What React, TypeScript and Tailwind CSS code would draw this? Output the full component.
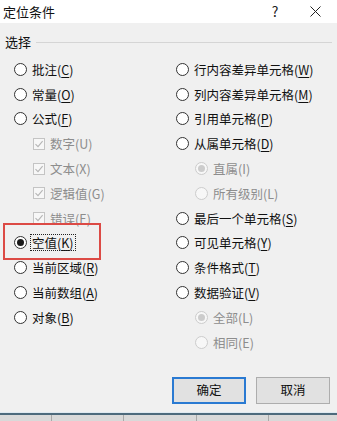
import React from 'react'

const FONT = '"Noto Sans CJK SC", "Noto Sans", sans-serif'

type Item = {
  label: string
  key: string
  kind: 'radio' | 'check' | 'sub'
  checked?: boolean
  disabled?: boolean
  underline?: boolean
}

const left: Item[] = [
  { label: '批注', key: 'C', kind: 'radio', underline: true },
  { label: '常量', key: 'O', kind: 'radio', underline: true },
  { label: '公式', key: 'F', kind: 'radio', underline: true },
  { label: '数字', key: 'U', kind: 'check', checked: true, disabled: true },
  { label: '文本', key: 'X', kind: 'check', checked: true, disabled: true },
  { label: '逻辑值', key: 'G', kind: 'check', checked: true, disabled: true },
  { label: '错误', key: 'E', kind: 'check', checked: true, disabled: true },
  { label: '空值', key: 'K', kind: 'radio', checked: true, underline: true },
  { label: '当前区域', key: 'R', kind: 'radio', underline: true },
  { label: '当前数组', key: 'A', kind: 'radio', underline: true },
  { label: '对象', key: 'B', kind: 'radio', underline: true },
]

const right: Item[] = [
  { label: '行内容差异单元格', key: 'W', kind: 'radio', underline: true },
  { label: '列内容差异单元格', key: 'M', kind: 'radio', underline: true },
  { label: '引用单元格', key: 'P', kind: 'radio', underline: true },
  { label: '从属单元格', key: 'D', kind: 'radio', underline: true },
  { label: '直属', key: 'I', kind: 'sub', checked: true, disabled: true },
  { label: '所有级别', key: 'L', kind: 'sub', disabled: true },
  { label: '最后一个单元格', key: 'S', kind: 'radio', underline: true },
  { label: '可见单元格', key: 'Y', kind: 'radio', underline: true },
  { label: '条件格式', key: 'T', kind: 'radio', underline: true },
  { label: '数据验证', key: 'V', kind: 'radio', underline: true },
  { label: '全部', key: 'L', kind: 'sub', checked: true, disabled: true },
  { label: '相同', key: 'E', kind: 'sub', disabled: true },
]

function Radio({ checked, disabled }: { checked?: boolean; disabled?: boolean }) {
  return (
    <span
      className={`w-[13px] h-[13px] rounded-full border flex items-center justify-center shrink-0 ${
        disabled ? 'border-[#cccccc] bg-[#f7f7f7]' : 'border-[#333333] bg-white'
      }`}
    >
      {checked && (
        <span
          className={`w-[7px] h-[7px] rounded-full ${
            disabled ? 'bg-[#cccccc]' : 'bg-[#1a1a1a]'
          }`}
        />
      )}
    </span>
  )
}

function Check() {
  return (
    <span className="w-[12px] h-[12px] border border-[#c4c4c4] bg-[#f7f7f7] flex items-center justify-center shrink-0">
      <svg width="10" height="10" viewBox="0 0 10 10">
        <path d="M1.5 5.2 L4 7.6 L8.6 2.2" fill="none" stroke="#b5b5b5" strokeWidth="1.1" />
      </svg>
    </span>
  )
}

function Row({ item, focus }: { item: Item; focus?: boolean }) {
  const indent =
    item.kind === 'radio' ? 'pl-0' : item.kind === 'check' ? 'pl-[19px]' : 'pl-[19px]'
  const text = (
    <span className={item.disabled ? 'text-[#8d8d8d]' : 'text-[#111111]'}>
      {item.label}(
      <span className={item.underline ? 'underline underline-offset-2' : ''}>{item.key}</span>)
    </span>
  )
  return (
    <div className={`h-[24.8px] flex items-center ${indent}`}>
      {item.kind === 'check' ? (
        <Check />
      ) : (
        <Radio checked={item.checked} disabled={item.disabled} />
      )}
      <span
        className={`ml-[4px] leading-[15px] px-[1px] ${
          focus ? 'outline outline-1 outline-dotted outline-[#222222]' : ''
        }`}
      >
        {text}
      </span>
    </div>
  )
}

export default function App() {
  return (
    <div
      className="relative w-[337px] h-[421px] bg-[#f0f0f0] overflow-hidden flex flex-col text-[12.5px]"
      style={{ fontFamily: FONT }}
    >
      {/* Title bar */}
      <div className="h-[23px] bg-white flex items-center pl-[3px] shrink-0">
        <span className="text-[13px] text-[#111111]">定位条件</span>
        <span className="ml-auto w-[20px] text-center text-[14px] text-[#222222] mr-[25px]">?</span>
        <svg width="11" height="11" viewBox="0 0 11 11" className="mr-[16px]">
          <path d="M0.5 0.5 L10.5 10.5 M10.5 0.5 L0.5 10.5" stroke="#222222" strokeWidth="1" />
        </svg>
      </div>

      {/* Group header */}
      <div className="flex items-center mt-[10px] pl-[5px] pr-[5px] h-[18px]">
        <span className="text-[#111111] text-[13px]">选择</span>
        <span className="ml-[5px] flex-1 h-px bg-[#d5d5d5]" />
      </div>

      {/* Options */}
      <div className="flex mt-[6px]">
        <div className="w-[163px] pl-[14px] flex flex-col">
          {left.map((it) => (
            <Row key={it.label} item={it} focus={it.key === 'K'} />
          ))}
        </div>
        <div className="flex-1 pl-[13px] flex flex-col">
          {right.map((it) => (
            <Row key={it.label} item={it} />
          ))}
        </div>
      </div>

      {/* Buttons */}
      <div className="absolute left-[172px] top-[377px] flex gap-[10px]">
        <button className="w-[74px] h-[27px] bg-[#e1e1e1] border-2 border-[#2a7ad2] text-[12.5px] text-[#111111]">
          确定
        </button>
        <button className="w-[74px] h-[27px] bg-[#e1e1e1] border border-[#adadad] text-[12.5px] text-[#111111]">
          取消
        </button>
      </div>

      {/* Highlight box */}
      <div className="absolute left-[3px] top-[223px] w-[98px] h-[37px] border-2 border-[#dc4a45]" />

      {/* Sheet behind */}
      <div className="absolute left-0 right-0 top-[412px] bottom-0 flex flex-col">
        <div className="h-px bg-[#dfe9f0]" />
        <div className="h-[2px] bg-[#4d6a7c]" />
        <div className="flex-1 bg-[#d9d9d9] flex">
          <div className="w-[52px] border-r border-[#a9a9a9]" />
          <div className="w-[72px] border-r border-[#a9a9a9]" />
          <div className="w-[73px] border-r border-[#a9a9a9]" />
          <div className="w-[72px] border-r border-[#a9a9a9]" />
        </div>
      </div>
    </div>
  )
}
